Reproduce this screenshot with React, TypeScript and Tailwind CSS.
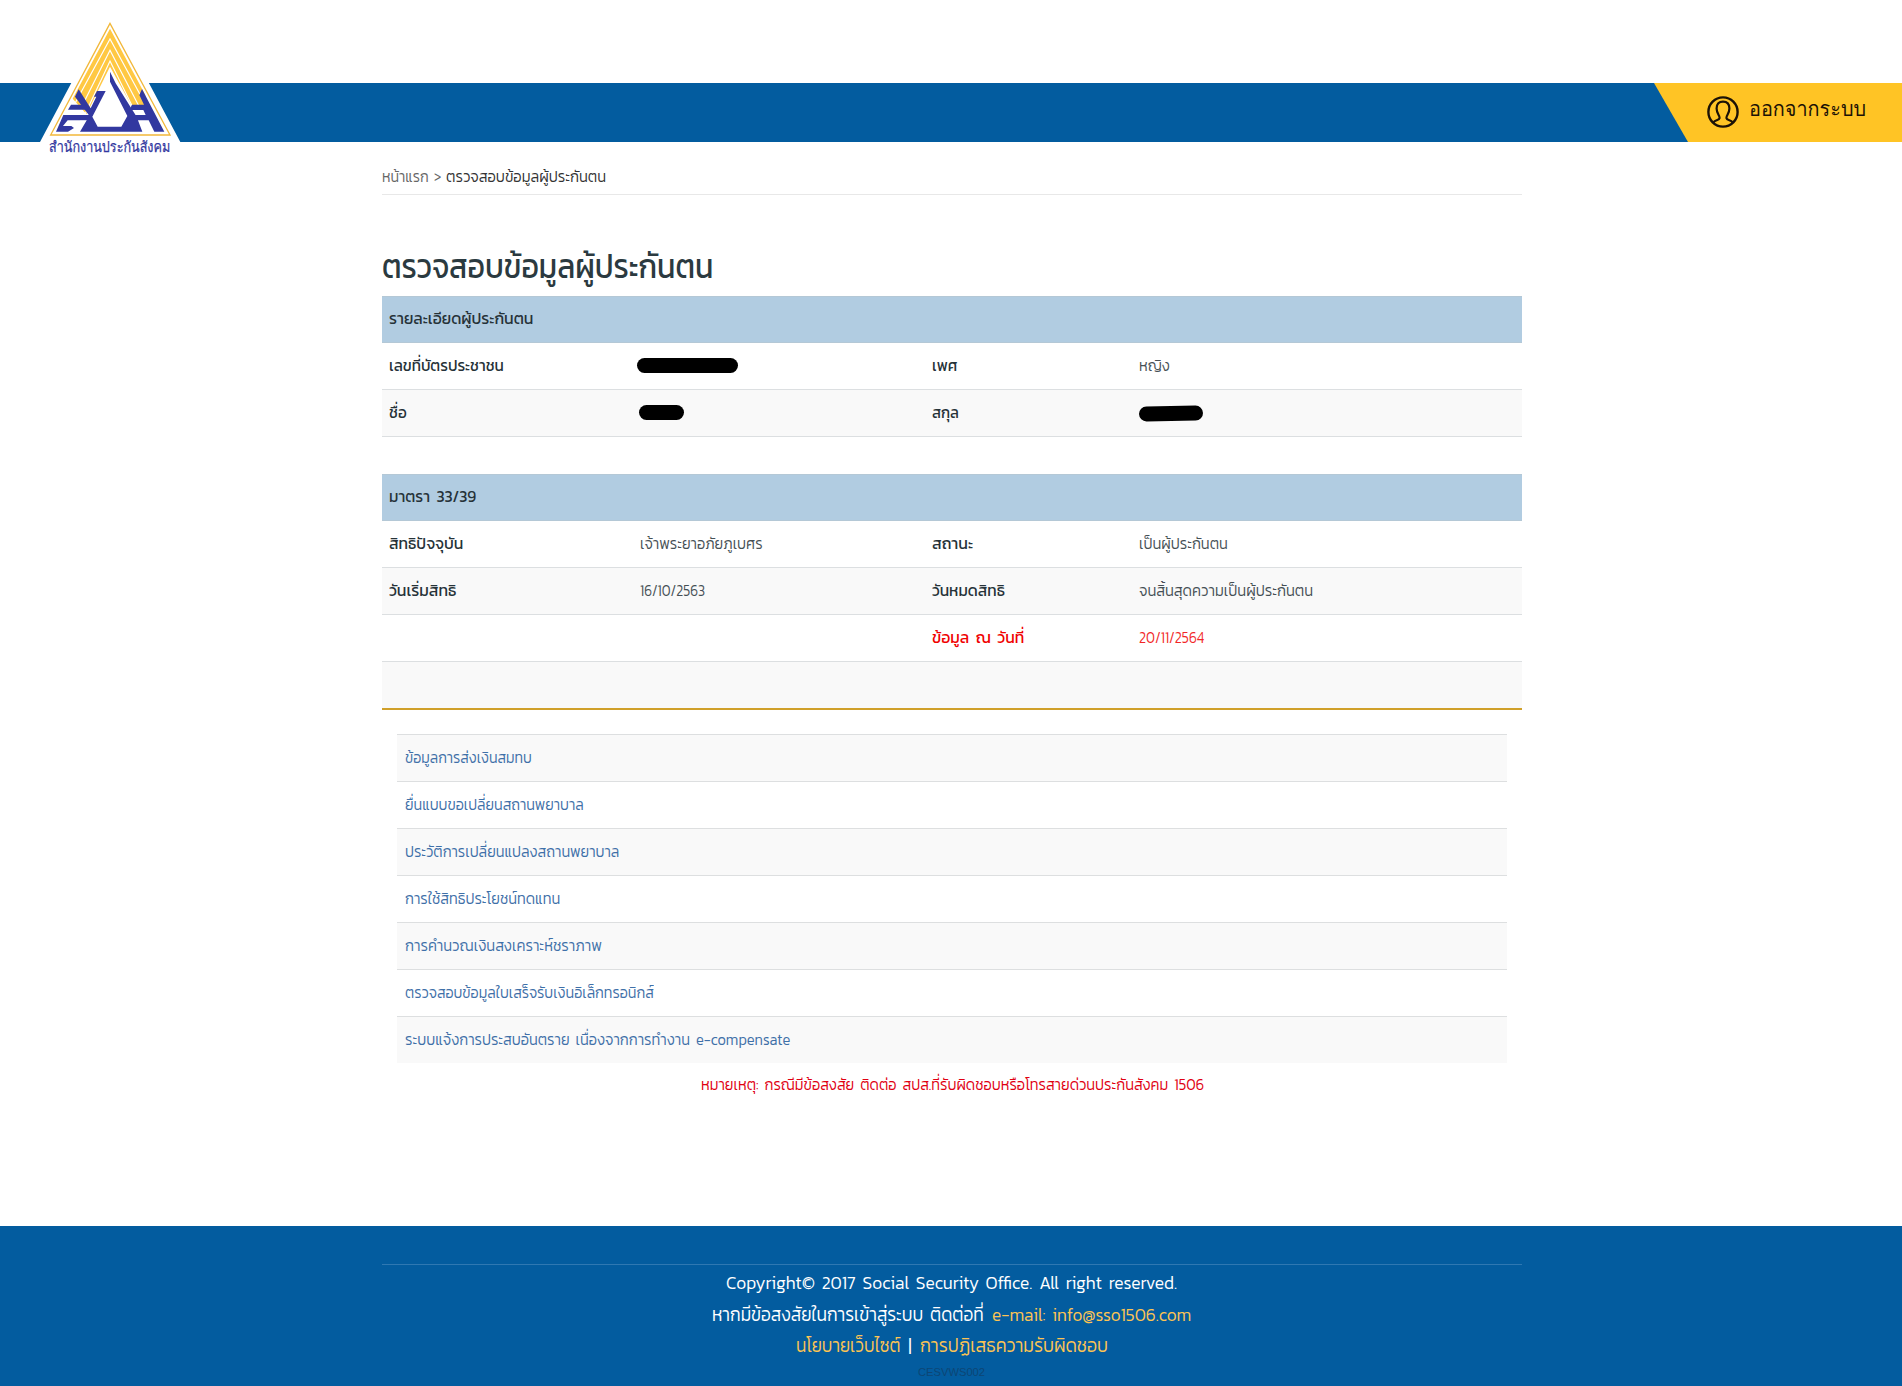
import { useLayoutEffect, useRef, useState } from 'react';
import type { ReactNode } from 'react';

/** Inline text that is condensed or expanded to a fixed width. */
function Fit({ w, className = '', children }: { w: number; className?: string; children: ReactNode }) {
  const ref = useRef<HTMLSpanElement>(null);
  const [scale, setScale] = useState(1);
  useLayoutEffect(() => {
    if (ref.current && ref.current.offsetWidth > 0) setScale(w / ref.current.offsetWidth);
  }, [w]);
  return (
    <span className={`inline-block whitespace-nowrap ${className}`} style={{ width: w }}>
      <span ref={ref} className="inline-block origin-left" style={{ transform: `scaleX(${scale})` }}>
        {children}
      </span>
    </span>
  );
}

function Logo() {
  return (
    <div className="absolute top-[10px] left-[35px] w-[150px]">
      <svg className="block h-[124px] w-[150px] overflow-visible" viewBox="105 30 450 372">
        <path d="M330 30L120 426L100 440H560L541 426Z" fill="#fff" />
        <path d="M330 70L152 405H510Z" fill="none" stroke="#f2b83a" strokeWidth="4" />
        <path d="M330 86L218 296L262 345L330 205L398 330H436V285Z" fill="#ffc843" />
        <g fill="none" stroke="#fff" strokeWidth="3.5">
          <path d="M226 308L330 117L432 305" />
          <path d="M240 330L330 151L420 325" />
          <path d="M254 345L330 183L405 335" />
        </g>
        <path d="M330 200L258 345L268 400H400L402 330Z" fill="#fff" />
        <g fill="#3238a0">
          <path d="M330 215L347 250L392 322L410 350L427 395H262L240 395L268 347L225 290L236 268L272 325L289 290H282L291 273H317L277 350L293 380H364L382 348L330 245Z" />
          <path d="M213 314H256L265 329H204Z" />
          <path d="M190 345H278L268 361H203L189 378H214L222 384L204 395H168Z" />
          <path d="M396 314H432L418 285L426 267L493 395H463L446 361H402L394 345H437L430 330H388Z" />
        </g>
        <path d="M240 362L218 395H234L258 362Z" fill="#fff" />
      </svg>
      <Fit
        w={121}
        className="relative mt-[-2px] ml-[14px] font-['Loma','Noto_Sans',sans-serif] text-[15px] leading-[24px] text-[#3238a0] [-webkit-text-stroke:0.25px_#3238a0]"
      >
        สำนักงานประกันสังคม
      </Fit>
    </div>
  );
}

function Header() {
  return (
    <header className="relative h-[142px] pt-[83px]">
      <div className="flex h-[59px] justify-end bg-[#035c9f]">
        <div className="flex w-[248px] bg-[#ffc425] pl-[53px] [clip-path:polygon(0_0,100%_0,100%_100%,34px_100%)]">
          <svg className="mt-[13px] h-8 w-8" viewBox="0 0 32 32" fill="none" stroke="#1c1206" strokeWidth="2.4">
            <circle cx="16" cy="16" r="14.6" />
            <path
              d="M6.5 26.5C7.5 23.8 12.2 24.6 12.6 22C12.8 19.5 9.6 17.5 9.6 12.5C9.6 8 12 5.6 16 5.6S22.4 8 22.4 12.5C22.4 17.5 19.2 19.5 19.4 22C19.8 24.6 24.6 23.8 25.6 26.5"
              strokeWidth="2.2"
            />
          </svg>
          <Fit w={117} className="mt-[10px] ml-[10px] font-['Loma','Noto_Sans',sans-serif] text-[20px] leading-[32px] text-[#1c1206]">
            ออกจากระบบ
          </Fit>
        </div>
      </div>
      <Logo />
    </header>
  );
}

function Redaction({ w, className = '' }: { w: number; className?: string }) {
  return <div className={`h-[15px] rounded-full bg-black ${className}`} style={{ width: w }} />;
}

type Cell = { text: string; w: number } | ReactNode;

function isText(c: Cell): c is { text: string; w: number } {
  return typeof c === 'object' && c !== null && 'text' in c;
}

function Row({ cells, striped, red }: { cells: Cell[]; striped?: boolean; red?: boolean }) {
  return (
    <div
      className={`grid h-[47px] grid-cols-[251px_292px_207px_1fr] items-center border-b border-[#dcdfe1] pb-[2px] pl-[7px] ${striped ? 'bg-[#f9f9f9]' : ''} ${red ? 'text-[#f00000]' : 'text-[#263238]'}`}
    >
      {cells.map((c, i) => (
        <div key={i} className={i % 2 === 0 ? 'font-normal' : 'font-light'}>
          {isText(c) ? <Fit w={c.w} className={i % 2 === 0 ? '' : 'opacity-85'}>{c.text}</Fit> : c}
        </div>
      ))}
    </div>
  );
}

function SectionHead({ text, w }: { text: string; w: number }) {
  return (
    <div className="flex h-[47px] items-center border-y border-[#b4c8d6] bg-[#b1cce1] pb-[4px] pl-[7px] font-normal text-[#263238]">
      <Fit w={w}>{text}</Fit>
    </div>
  );
}

const links: [string, number][] = [
  ['ข้อมูลการส่งเงินสมทบ', 127],
  ['ยื่นแบบขอเปลี่ยนสถานพยาบาล', 179],
  ['ประวัติการเปลี่ยนแปลงสถานพยาบาล', 214],
  ['การใช้สิทธิประโยชน์ทดแทน', 155],
  ['การคำนวณเงินสงเคราะห์ชราภาพ', 197],
  ['ตรวจสอบข้อมูลใบเสร็จรับเงินอิเล็กทรอนิกส์', 249],
  ['ระบบแจ้งการประสบอันตราย เนื่องจากการทำงาน e-compensate', 385],
];

function Footer() {
  return (
    <footer className="h-[160px] bg-[#035c9f] pt-[38px] pl-[2px] text-[19px] font-light text-white">
      <div className="mx-auto w-[1140px] border-t border-[#2f78b2] text-center leading-[31.5px]">
        <div className="mt-[2px] mr-px">
          <Fit w={451}>Copyright© 2017 Social Security Office. All right reserved.</Fit>
        </div>
        <div className="mr-[2px] flex justify-center gap-[8px]">
          <Fit w={272}>หากมีข้อสงสัยในการเข้าสู่ระบบ ติดต่อที่</Fit>
          <a href="#email" className="text-[#fdc453]">
            <Fit w={199}>e-mail: info@sso1506.com</Fit>
          </a>
        </div>
        <div className="flex justify-center gap-[8px]">
          <a href="#policy" className="text-[#fdc453]">
            <Fit w={104}>นโยบายเว็บไซต์</Fit>
          </a>
          <span className="w-[4px]">|</span>
          <a href="#disclaimer" className="text-[#fdc453]">
            <Fit w={188}>การปฏิเสธความรับผิดชอบ</Fit>
          </a>
        </div>
        <div className="mr-[2px] font-['Liberation_Sans',sans-serif] text-[11px] leading-[20px] font-normal text-[#0c4675]">
          <Fit w={67}>CESVWS002</Fit>
        </div>
      </div>
    </footer>
  );
}

export default function App() {
  return (
    <div className="h-[1386px] overflow-hidden bg-white font-['Kanit','Noto_Sans_Thai','Noto_Sans',sans-serif] text-[17px] leading-[24px] font-light [word-spacing:0.18em]">
      <Header />
      <div className="pl-[2px]">
        <main className="mx-auto h-[1084px] w-[1140px]">
          <nav className="flex h-[53px] gap-[5px] border-b border-[#e8e8e8] pt-[22px] text-[#333]">
            <Fit w={47} className="text-[#666]">หน้าแรก</Fit>
            <Fit w={7} className="text-[#666]">&gt;</Fit>
            <Fit w={160}>ตรวจสอบข้อมูลผู้ประกันตน</Fit>
          </nav>
          <h1 className="h-[101px] pt-[46px] text-[34.5px] leading-[50px] font-normal text-[#2b3a40]">
            <Fit w={331}>ตรวจสอบข้อมูลผู้ประกันตน</Fit>
          </h1>
          <section>
            <SectionHead text="รายละเอียดผู้ประกันตน" w={144} />
            <Row
              cells={[
                { text: 'เลขที่บัตรประชาชน', w: 115 },
                <Redaction w={101} className="ml-[-3px]" />,
                { text: 'เพศ', w: 25 },
                { text: 'หญิง', w: 31 },
              ]}
            />
            <Row
              striped
              cells={[
                { text: 'ชื่อ', w: 18 },
                <Redaction w={45} className="ml-[-1px]" />,
                { text: 'สกุล', w: 27 },
                <Redaction w={64} className="mt-[2px] rotate-[-1deg]" />,
              ]}
            />
          </section>
          <section className="mt-[37px] border-b-2 border-[#d0a02a]">
            <SectionHead text="มาตรา 33/39" w={87} />
            <Row
              cells={[
                { text: 'สิทธิปัจจุบัน', w: 74 },
                { text: 'เจ้าพระยาอภัยภูเบศร', w: 123 },
                { text: 'สถานะ', w: 41 },
                { text: 'เป็นผู้ประกันตน', w: 89 },
              ]}
            />
            <Row
              striped
              cells={[
                { text: 'วันเริ่มสิทธิ', w: 67 },
                { text: '16/10/2563', w: 65 },
                { text: 'วันหมดสิทธิ', w: 73 },
                { text: 'จนสิ้นสุดความเป็นผู้ประกันตน', w: 174 },
              ]}
            />
            <Row red cells={['', '', { text: 'ข้อมูล ณ วันที่', w: 92 }, { text: '20/11/2564', w: 65 }]} />
            <div className="h-[46px] bg-[#f9f9f9]" />
          </section>
          <ul className="mx-[15px] mt-[24px]">
            {links.map(([text, w]) => (
              <li
                key={text}
                className="flex h-[47px] items-center border-t border-[#dddfe0] pb-[2px] pl-2 text-[#3f70a8] odd:bg-[#f9f9f9]"
              >
                <a href="#link">
                  <Fit w={w}>{text}</Fit>
                </a>
              </li>
            ))}
          </ul>
          <p className="mt-[9px] text-center text-[#e00012]">
            <Fit w={503}>หมายเหตุ: กรณีมีข้อสงสัย ติดต่อ สปส.ที่รับผิดชอบหรือโทรสายด่วนประกันสังคม 1506</Fit>
          </p>
        </main>
      </div>
      <Footer />
    </div>
  );
}
